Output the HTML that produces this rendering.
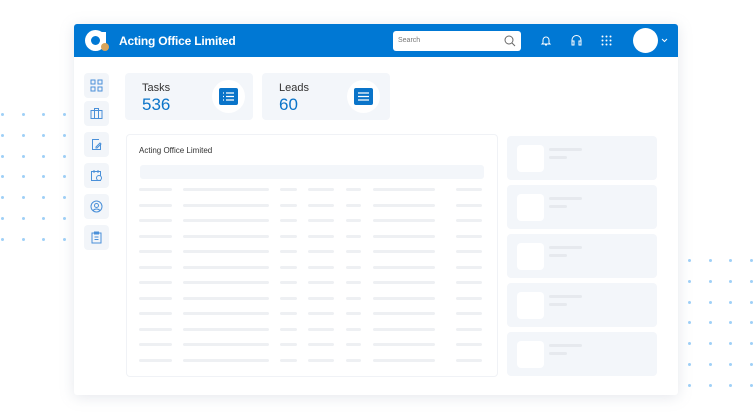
<!DOCTYPE html>
<html><head><style>
*{margin:0;padding:0;box-sizing:border-box}
body{width:753px;height:416px;background:#fff;position:relative;overflow:hidden;font-family:"Liberation Sans",sans-serif}
.a{position:absolute}
.dot{position:absolute;width:3px;height:3px;border-radius:50%;background:#9fd0f7}
.win{left:74px;top:24px;width:604px;height:371px;background:#fff;box-shadow:0 2px 14px rgba(150,160,180,.25);border-radius:3px;overflow:hidden}
.hdr{left:0;top:0;width:604px;height:33px;background:#0078d4}
.sb{width:25px;height:25px;background:#f2f5f9;border-radius:4px;left:10px}
.sb svg{position:absolute;left:6px;top:6px}
.card{background:#f3f6fa;border-radius:4px}
.bar{position:absolute;height:3px;background:#eef0f3;border-radius:2px}
.rc{position:absolute;left:433px;width:150px;height:44px;background:#f3f6fa;border-radius:4px}
.rc i{position:absolute;left:10px;top:9px;width:27px;height:27px;background:#fff;border-radius:4px}
.rc b{position:absolute;left:42px;height:3px;background:#e6e9ee;border-radius:2px}
</style></head><body>
<div id="dots"></div>
<div class="a win">
 <div class="a hdr">
  <div class="a" style="left:11px;top:6px;width:21px;height:21px;border-radius:50%;background:#fff"></div>
  <div class="a" style="left:17px;top:12px;width:9px;height:9px;border-radius:50%;background:#0078d4"></div>
  <div class="a" style="left:27px;top:8px;width:5px;height:14px;background:#fff"></div>
  <div class="a" style="left:27px;top:19px;width:8px;height:8px;border-radius:50%;background:#d8a45a"></div>
  <div class="a" style="left:45px;top:10px;color:#fff;font-size:12px;font-weight:bold;letter-spacing:-.2px">Acting Office Limited</div>
  <div class="a" style="left:319px;top:7px;width:128px;height:20px;background:#fff;border-radius:3px">
   <span class="a" style="left:5px;top:6px;font-size:7px;color:#777">Search</span>
   <svg class="a" style="left:111px;top:4px" width="12" height="12"><circle cx="5" cy="5" r="4" fill="none" stroke="#666" stroke-width="1"/><path d="M8 8l3 3" stroke="#666"/></svg>
  </div>
  <svg class="a" style="left:466px;top:10px" width="12" height="13"><path d="M3 9V6a3 3 0 0 1 6 0v3l1 1H2z M5 11h2" fill="none" stroke="#fff" stroke-width="1"/></svg>
  <svg class="a" style="left:496px;top:10px" width="13" height="13"><path d="M2 9V6a4.5 4.5 0 0 1 9 0v3" fill="none" stroke="#fff"/><rect x="2" y="7" width="2" height="4" fill="none" stroke="#fff"/><rect x="9" y="7" width="2" height="4" fill="none" stroke="#fff"/></svg>
  <svg class="a" style="left:527px;top:11px" width="12" height="12" fill="#fff"><circle cx="1.5" cy="1.5" r="1"/><circle cx="5.5" cy="1.5" r="1"/><circle cx="9.5" cy="1.5" r="1"/><circle cx="1.5" cy="5.5" r="1"/><circle cx="5.5" cy="5.5" r="1"/><circle cx="9.5" cy="5.5" r="1"/><circle cx="1.5" cy="9.5" r="1"/><circle cx="5.5" cy="9.5" r="1"/><circle cx="9.5" cy="9.5" r="1"/></svg>
  <div class="a" style="left:559px;top:4px;width:25px;height:25px;border-radius:50%;background:#fff"></div>
  <svg class="a" style="left:587px;top:14px" width="7" height="5"><path d="M1 1l2.5 2.5L6 1" fill="none" stroke="#fff"/></svg>
 </div>
 <div class="a sb" style="top:49px"><svg width="13" height="13" fill="none" stroke="#4a90d9" stroke-width="1"><rect x="1" y="1" width="4" height="4"/><rect x="8" y="1" width="4" height="4"/><rect x="1" y="8" width="4" height="4"/><rect x="8" y="8" width="4" height="4"/></svg></div>
 <div class="a sb" style="top:77px"><svg width="13" height="13" fill="none" stroke="#4a90d9"><rect x="1" y="3.5" width="11" height="8"/><path d="M4.5 3.5V1.5h4v2M4.5 3.5v8M8.5 3.5v8"/></svg></div>
 <div class="a sb" style="top:108px"><svg width="13" height="13" fill="none" stroke="#4a90d9"><path d="M9 1.5H2.5v10h8V6"/><path d="M6 9l4-4 1 1-4 4H6z"/></svg></div>
 <div class="a sb" style="top:139px"><svg width="13" height="13" fill="none" stroke="#4a90d9"><rect x="1.5" y="2.5" width="9" height="9"/><path d="M4 1v3M8 1v3"/><circle cx="9" cy="9" r="2.5" fill="#f2f5f9"/></svg></div>
 <div class="a sb" style="top:170px"><svg width="13" height="13" fill="none" stroke="#4a90d9"><circle cx="6.5" cy="6.5" r="5.5"/><circle cx="6.5" cy="5.5" r="2"/><path d="M3 10.5c2-2 5-2 7 0"/></svg></div>
 <div class="a sb" style="top:201px"><svg width="13" height="13" fill="none" stroke="#4a90d9"><rect x="2" y="2" width="9" height="10"/><rect x="4.5" y="1" width="4" height="2"/><path d="M4.5 6h4M4.5 8.5h4"/></svg></div>

 <div class="a card" style="left:51px;top:49px;width:128px;height:47px">
  <div class="a" style="left:17px;top:9px;font-size:11px;color:#333">Tasks</div>
  <div class="a" style="left:17px;top:22px;font-size:17px;color:#0a74c9">536</div>
  <div class="a" style="left:87px;top:7px;width:33px;height:33px;border-radius:50%;background:#fff"></div>
  <div class="a" style="left:94px;top:15px;width:19px;height:17px;border-radius:2px;background:#0a74c9"></div>
  <svg class="a" style="left:97px;top:18px" width="13" height="11" stroke="#fff" stroke-width="1.3"><path d="M1 2h1M4 2h8M1 5.5h1M4 5.5h8M1 9h1M4 9h8"/></svg>
 </div>
 <div class="a card" style="left:188px;top:49px;width:128px;height:47px">
  <div class="a" style="left:17px;top:9px;font-size:11px;color:#333">Leads</div>
  <div class="a" style="left:17px;top:22px;font-size:17px;color:#0a74c9">60</div>
  <div class="a" style="left:85px;top:7px;width:33px;height:33px;border-radius:50%;background:#fff"></div>
  <div class="a" style="left:92px;top:15px;width:19px;height:17px;border-radius:2px;background:#0a74c9"></div>
  <svg class="a" style="left:95px;top:18px" width="13" height="11" stroke="#fff" stroke-width="1.3"><path d="M1 2h11M1 5.5h11M1 9h11"/></svg>
 </div>

 <div class="a" id="main" style="left:52px;top:110px;width:372px;height:243px;border:1px solid #f0f2f6;border-radius:4px;background:#fff">
  <div class="a" style="left:12px;top:11px;font-size:8px;color:#333">Acting Office Limited</div>
  <div class="a" style="left:13px;top:30px;width:344px;height:14px;background:#f3f6fa;border-radius:3px"></div>
 </div>
 <div id="rcs"></div>
</div>
<script>
var d=document.getElementById('dots'),h='';
for(var r=0;r<7;r++)for(var c=0;c<4;c++){h+='<div class="dot" style="left:'+(1+c*20.5)+'px;top:'+(113+r*20.8)+'px"></div>';h+='<div class="dot" style="left:'+(688+c*20.5)+'px;top:'+(259+r*20.8)+'px"></div>';}
d.innerHTML=h;
var m=document.getElementById('main'),cols=[[12,33],[56,86],[153,17],[181,26],[219,15],[246,62],[329,26]],s='';
for(var r=0;r<12;r++)for(var i=0;i<7;i++)s+='<div class="bar" style="left:'+cols[i][0]+'px;top:'+(53+r*15.5)+'px;width:'+cols[i][1]+'px"></div>';
m.insertAdjacentHTML('beforeend',s);
var rc=document.getElementById('rcs'),t='';
for(var i=0;i<5;i++)t+='<div class="rc" style="top:'+(112+i*49)+'px"><i></i><b style="top:12px;width:33px"></b><b style="top:20px;width:18px"></b></div>';
rc.innerHTML=t;
</script>
</body></html>
